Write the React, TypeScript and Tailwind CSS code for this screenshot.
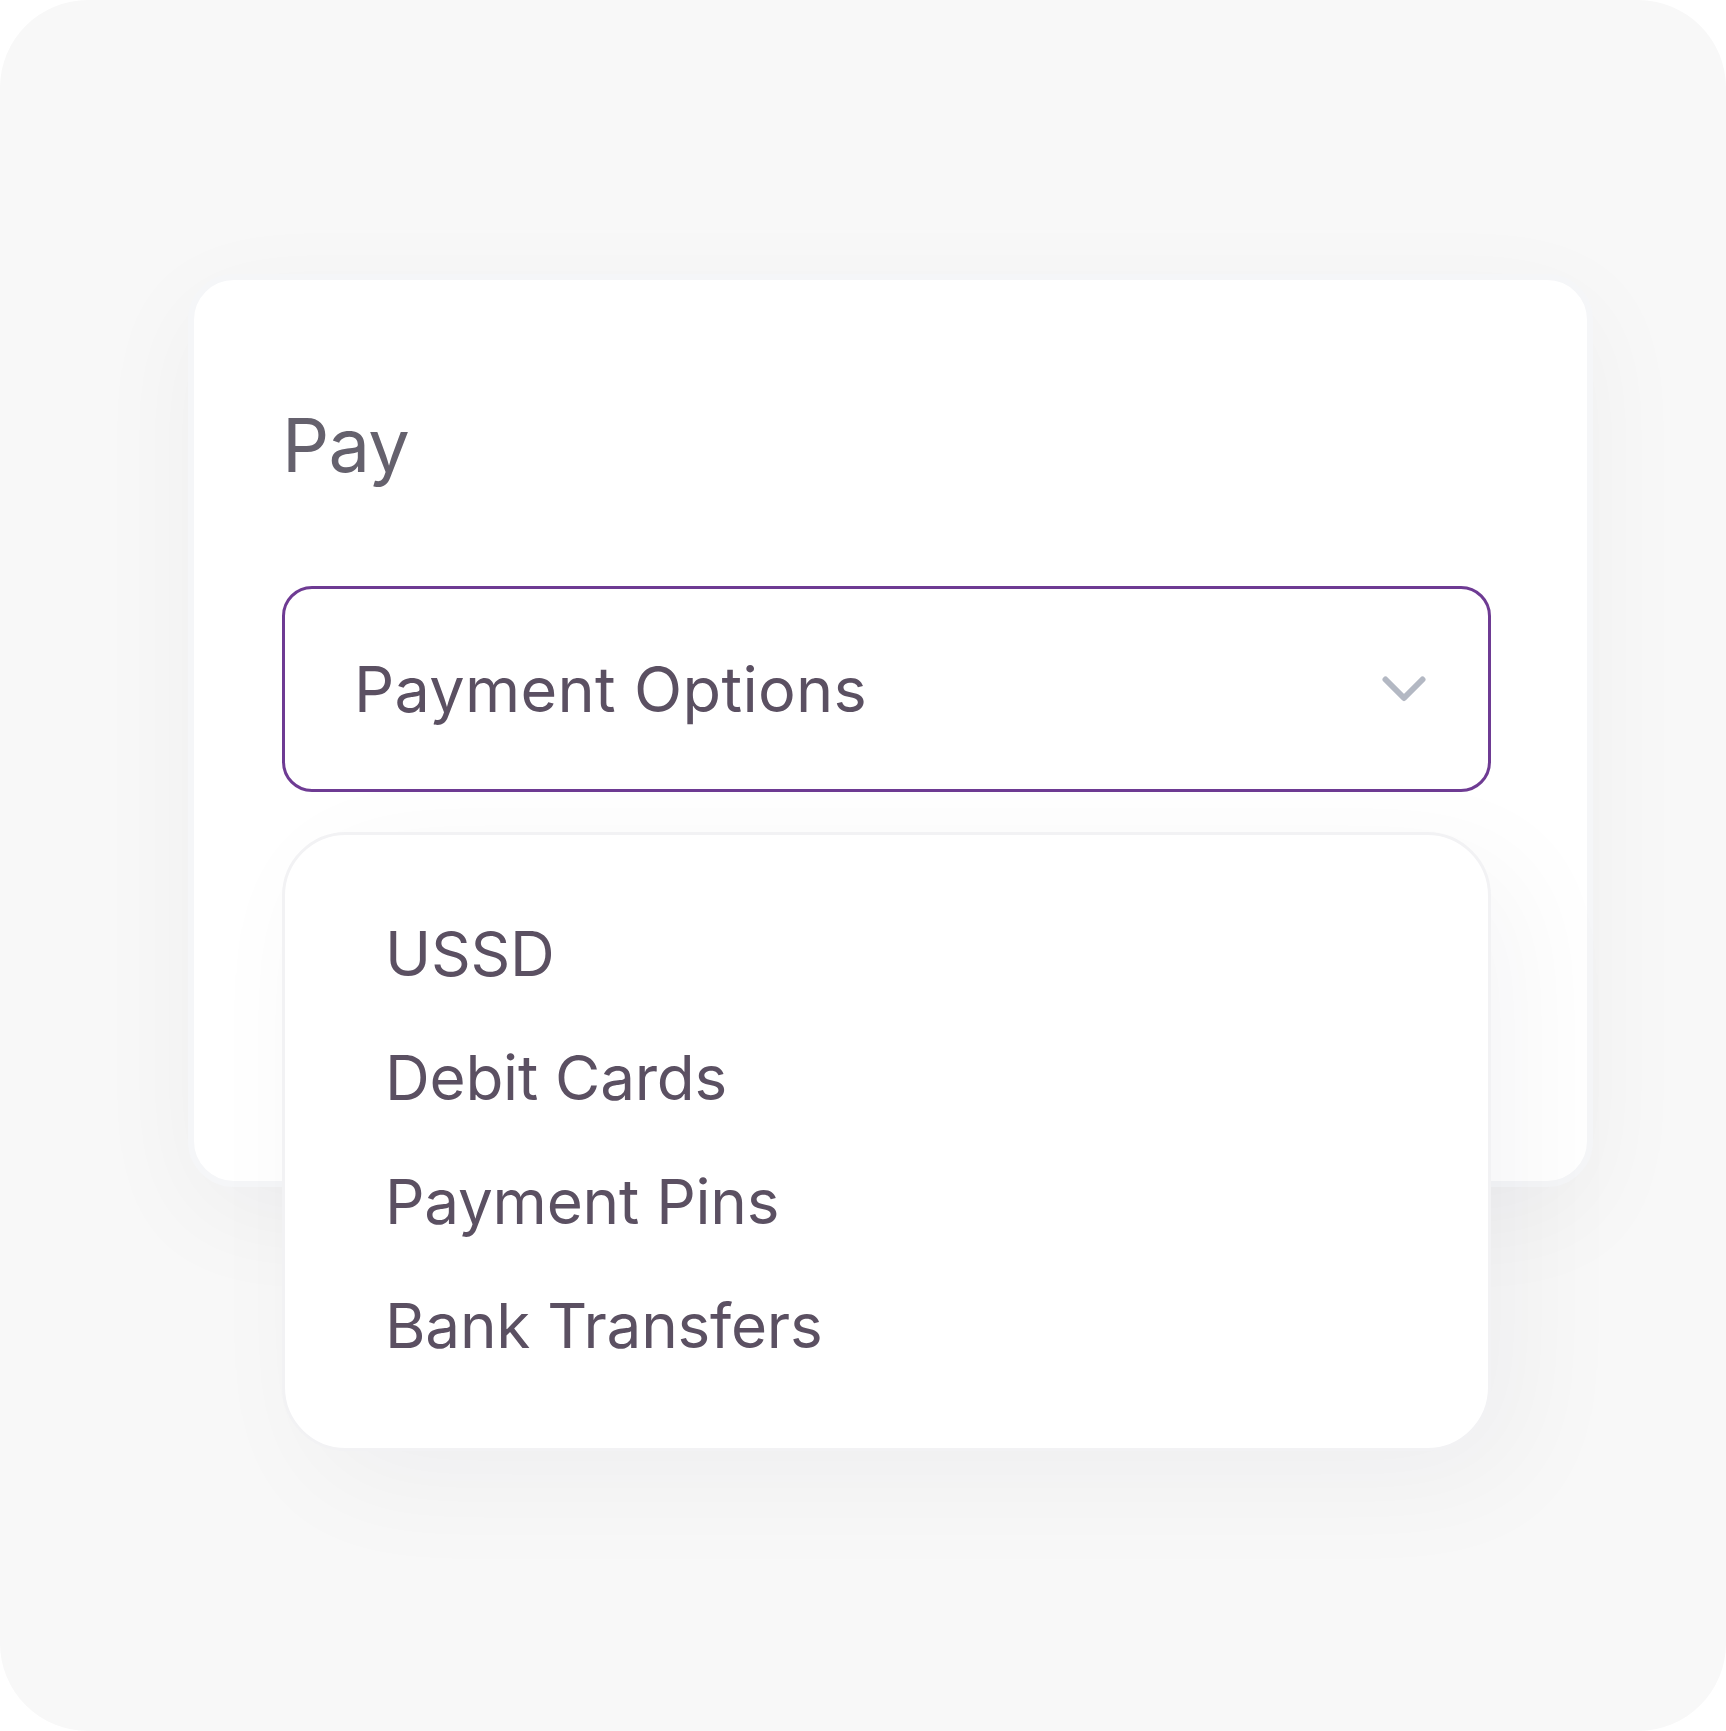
const options = ['USSD', 'Debit Cards', 'Payment Pins', 'Bank Transfers'];

function Chevron() {
  return (
    <svg width="44" height="26" viewBox="0 0 44 26" fill="none">
      <path
        d="M3.5 3.5 L22 22 L40.5 3.5"
        stroke="#b3b8c3"
        strokeWidth="6"
        strokeLinecap="round"
        strokeLinejoin="round"
      />
    </svg>
  );
}

export default function App() {
  return (
    <div className="w-[1726px] h-[1731px] bg-white font-['Inter',sans-serif]">
      <div className="w-full h-full rounded-[88px] bg-[#f8f8f8] pl-[188px] pt-[274px]">
        {/* Card */}
        <div className="w-[1405px] h-[913px] rounded-[46px] border-[6px] border-[#f5f6f8] bg-white pl-[88px] pt-[128px] shadow-[0_30px_110px_rgba(17,24,39,0.045)]">
          <h1 className="text-[74px] leading-none text-[#65616d] font-normal tracking-[-0.01em]">
            Pay
          </h1>

          <div className="relative mt-[104px] w-[1209px]">
            {/* Select */}
            <div className="h-[206px] rounded-[30px] border-[3px] border-[#6e3b93] flex items-center justify-between pl-[69px] pr-[62px]">
              <span className="text-[63px] leading-none text-[#5b5062] tracking-[0.005em]">
                Payment Options
              </span>
              <Chevron />
            </div>

            {/* Menu */}
            <div className="absolute left-0 top-[calc(100%+40px)] w-[1209px] h-[619px] rounded-[64px] border-[3px] border-[#f2f2f4] bg-white pl-[100px] pt-[57px] shadow-[30px_30px_120px_rgba(17,24,39,0.045)]">
              {options.map((o) => (
                <div
                  key={o}
                  className="text-[62px] leading-[124px] text-[#5b5062] tracking-[-0.004em]"
                >
                  {o}
                </div>
              ))}
            </div>
          </div>
        </div>
      </div>
    </div>
  );
}
